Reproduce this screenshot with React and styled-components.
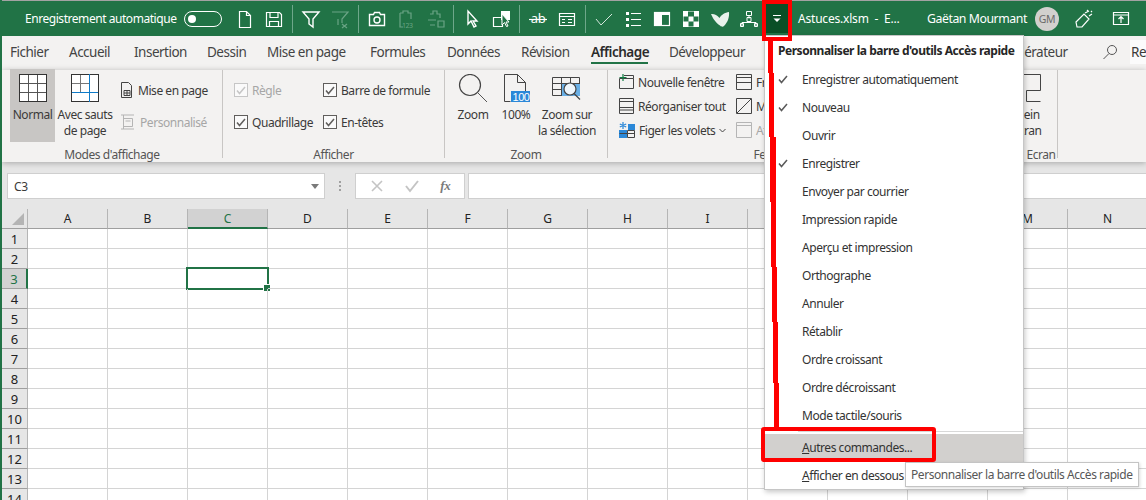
import React from "react"
import styled, { createGlobalStyle } from "styled-components"

const GlobalStyle = createGlobalStyle`
    html, body {
        margin: 0;
        padding: 0;
        background: #fff;
    }
    * {
        box-sizing: border-box;
    }
`

const GREEN = "#217346"
const FONT = `"Noto Sans", "Open Sans", sans-serif`

const Page = styled.div`
    position: relative;
    width: 1146px;
    height: 500px;
    overflow: hidden;
    display: flex;
    flex-direction: column;
    border-left: 2px solid ${GREEN};
    font-family: ${FONT};
    font-size: 12px;
    color: #3b3a39;
    letter-spacing: -0.45px;
`

const TitleBar = styled.header`
    flex: none;
    height: 36px;
    display: flex;
    align-items: center;
    background: ${GREEN};
    border-top: 1px solid #a3a3a3;
    color: #fff;
    padding-left: 23px;
`

const AutoSave = styled.span`
    width: 159px;
    white-space: nowrap;
`

const Toggle = styled.span`
    width: 38px;
    height: 16px;
    border: 1px solid #fff;
    border-radius: 8px;
    display: flex;
    align-items: center;
    padding-left: 3px;
    margin-right: 8px;
    &::before {
        content: "";
        width: 8px;
        height: 8px;
        border-radius: 50%;
        background: #fff;
    }
`

const QatSlot = styled.span`
    flex: none;
    width: 29px;
    height: 30px;
    margin-left: ${(p) => p.$left || 0}px;
    display: flex;
    align-items: center;
    justify-content: center;
`

const QatSep = styled.span`
    flex: none;
    width: 1px;
    height: 28px;
    margin: 0 3.5px;
    background: #6ea78a;
`

const QatMore = styled.span`
    flex: none;
    width: 24px;
    height: 29px;
    margin-left: 2px;
    background: #0a4f26;
    display: flex;
    align-items: center;
    justify-content: center;
`

const FileName = styled.span`
    width: 129px;
    margin-left: 9px;
    letter-spacing: -0.2px;
    white-space: pre;
`

const UserName = styled.span`
    width: 108px;
    font-size: 12.3px;
    white-space: nowrap;
`

const Avatar = styled.span`
    flex: none;
    width: 24px;
    height: 24px;
    border-radius: 50%;
    background: #d2d0ce;
    color: #6b6a69;
    font-size: 10.5px;
    display: flex;
    align-items: center;
    justify-content: center;
    margin-right: 10px;
`

const TabRow = styled.nav`
    flex: none;
    height: 34px;
    display: flex;
    align-items: center;
    background: #f3f2f1;
    padding: 0 0 3px 8px;
    font-size: 13.5px;
    letter-spacing: -0.5px;
`

const Tab = styled.span`
    flex: none;
    position: relative;
    width: ${(p) => p.$w}px;
    white-space: nowrap;
    font-weight: ${(p) => (p.$active ? 600 : 400)};
    color: ${(p) => (p.$active ? "#2b2b2b" : "#444")};
    ${(p) => p.$active && `
        &::after {
            content: "";
            position: absolute;
            left: 0;
            bottom: -3px;
            width: 57px;
            height: 2px;
            background: #217346;
        }
    `}
`

const SearchSlot = styled.span`
    flex: none;
    width: 28px;
    margin-right: 6px;
    display: flex;
    justify-content: center;
`

const SearchBox = styled.span`
    flex: none;
    background: #fbfbfb;
    height: 24px;
    line-height: 24px;
    padding-left: 1px;
    white-space: nowrap;
`

const Ribbon = styled.section`
    flex: none;
    position: relative;
    z-index: 2;
    height: 92px;
    display: flex;
    align-items: flex-start;
    background: #f3f2f1;
    box-shadow: 0 1px 6px rgba(0, 0, 0, 0.28);
`

const Group = styled.div`
    flex: none;
    width: ${(p) => p.$w}px;
    height: 88px;
    display: flex;
    flex-direction: column;
    border-right: 1px solid #c8c6c4;
`

const GroupBody = styled.div`
    flex: none;
    height: 76px;
    display: flex;
    padding-left: ${(p) => p.$pad || 0}px;
`

const GroupLabel = styled.div`
    height: 12px;
    line-height: 18px;
    text-align: center;
    color: #555;
    white-space: nowrap;
`

const LargeButton = styled.div`
    flex: none;
    width: ${(p) => p.$w}px;
    height: 73px;
    margin-top: -1px;
    padding-top: 5px;
    display: flex;
    flex-direction: column;
    align-items: center;
    text-align: center;
    line-height: 16px;
    white-space: nowrap;
    background: ${(p) => (p.$active ? "#c8c6c4" : "transparent")};
    svg {
        margin-bottom: 5px;
    }
`

const SmallColumn = styled.div`
    flex: none;
    width: ${(p) => p.$w || "auto"};
    margin-left: ${(p) => p.$left || 0}px;
    padding-top: ${(p) => p.$top || 0}px;
    display: flex;
    flex-direction: column;
    gap: ${(p) => p.$gap || 0}px;
`

const SmallRow = styled.div`
    height: 24px;
    display: flex;
    align-items: center;
    gap: ${(p) => p.$gap || 5}px;
    white-space: nowrap;
    color: ${(p) => (p.$off ? "#a6a6a6" : "inherit")};
`

const CheckBox = styled.span`
    flex: none;
    width: 14px;
    height: 14px;
    border: 1px solid ${(p) => (p.$off ? "#c6c6c6" : "#605e5c")};
    background: #fafafa;
    display: flex;
    align-items: center;
    justify-content: center;
`

const FormulaBar = styled.div`
    flex: none;
    height: 47px;
    padding: 11px 0 0 5px;
    display: flex;
    align-items: flex-start;
    background: #e6e6e6;
`

const NameBox = styled.div`
    flex: none;
    width: 318px;
    height: 26px;
    background: #fff;
    border: 1px solid #cfcfcf;
    display: flex;
    align-items: center;
    justify-content: space-between;
    padding: 0 5px 0 6px;
    &::after {
        content: "";
        border-left: 4px solid transparent;
        border-right: 4px solid transparent;
        border-top: 5px solid #7a7a7a;
    }
`

const Grip = styled.div`
    flex: none;
    width: 30px;
    height: 26px;
    display: flex;
    flex-direction: column;
    align-items: center;
    justify-content: center;
    gap: 2px;
    span {
        width: 2px;
        height: 2px;
        background: #a0a0a0;
    }
`

const FxBox = styled.div`
    flex: none;
    width: 110px;
    height: 26px;
    background: #fff;
    border: 1px solid #cfcfcf;
    display: flex;
    align-items: center;
    justify-content: space-around;
    padding: 0 3px;
`

const FxGlyph = styled.span`
    font-family: "Liberation Serif", serif;
    font-style: italic;
    font-size: 13px;
    font-weight: 700;
    color: #7a7a7a;
`

const FormulaInput = styled.div`
    flex: 1;
    height: 26px;
    margin-left: 3px;
    background: #fff;
    border: 1px solid #cfcfcf;
    border-right: 0;
`

const Sheet = styled.div`
    flex: 1;
    display: grid;
    grid-template-columns: 26px repeat(14, 80px);
    grid-auto-rows: 20px;
    background: #fff;
    color: #222;
    letter-spacing: 0;
`

const Corner = styled.div`
    background: #e6e6e6;
    border-bottom: 1px solid #9f9f9f;
    border-right: 1px solid #b5b5b5;
    display: flex;
    align-items: flex-start;
    justify-content: flex-end;
    padding: 4px 3px 0 0;
    &::after {
        content: "";
        border-left: 12px solid transparent;
        border-bottom: 12px solid #b4b4b4;
    }
`

const ColHead = styled.div`
    display: flex;
    align-items: center;
    justify-content: center;
    background: ${(p) => (p.$selected ? "#d2d2d2" : "#e6e6e6")};
    color: ${(p) => (p.$selected ? "#217346" : "#222")};
    border-right: 1px solid #b5b5b5;
    border-bottom: ${(p) => (p.$selected ? "2px solid #217346" : "1px solid #9f9f9f")};
`

const RowHead = styled.div`
    display: flex;
    align-items: center;
    justify-content: center;
    font-size: 13px;
    background: ${(p) => (p.$selected ? "#d2d2d2" : "#e6e6e6")};
    color: ${(p) => (p.$selected ? "#217346" : "#222")};
    border-bottom: 1px solid #9f9f9f;
    border-right: ${(p) => (p.$selected ? "2px solid #217346" : "1px solid #b5b5b5")};
`

const Cell = styled.div`
    position: relative;
    border-right: 1px solid #d4d4d4;
    border-bottom: 1px solid #d4d4d4;
`

const CellCursor = styled.div`
    position: absolute;
    top: -2px;
    left: -2px;
    right: -2px;
    bottom: -2px;
    border: 2px solid #217346;
    &::after {
        content: "";
        position: absolute;
        right: -3px;
        bottom: -3px;
        width: 6px;
        height: 6px;
        background: #217346;
        border: 1px solid #fff;
        border-right: 0;
        border-bottom: 0;
    }
`

const Menu = styled.div`
    position: absolute;
    z-index: 5;
    left: 762px;
    top: 35px;
    width: 260px;
    height: 455px;
    background: #fff;
    border: 1px solid #c6c6c6;
    box-shadow: 1px 2px 5px rgba(0, 0, 0, 0.22);
    color: #333;
`

const MenuTitle = styled.div`
    height: 30px;
    padding: 6px 0 0 13px;
    font-weight: 700;
    letter-spacing: -0.46px;
    color: #262626;
    white-space: nowrap;
`

const MenuItem = styled.div`
    height: 28px;
    padding-bottom: 2px;
    display: flex;
    align-items: center;
    background: ${(p) => (p.$hover ? "#d2d0ce" : "transparent")};
    white-space: nowrap;
`

const CheckSlot = styled.span`
    flex: none;
    width: 37px;
    display: flex;
    justify-content: center;
    padding-right: 1px;
`

const MenuSep = styled.div`
    height: 3px;
    margin-left: 33px;
    &::before {
        content: "";
        display: block;
        height: 1px;
        margin-top: 1px;
        background: #d8d8d8;
    }
`

const Tooltip = styled.div`
    position: absolute;
    z-index: 6;
    left: 903px;
    top: 462px;
    width: 234px;
    height: 25px;
    line-height: 23px;
    padding-left: 5px;
    background: #fff;
    border: 1px solid #c4c4c4;
    box-shadow: 1px 1px 3px rgba(0, 0, 0, 0.15);
    color: #575757;
    white-space: nowrap;
`

const Annotation = styled.svg`
    position: absolute;
    z-index: 7;
    left: -2px;
    top: 0;
    pointer-events: none;
`

const W = { fill: "none", stroke: "#fff", strokeWidth: 1.2 }
const D = { fill: "none", stroke: "#6aa485", strokeWidth: 1.2 }
const B = { fill: "none", stroke: "#444", strokeWidth: 1 }

const Ico = ({ size = 20, children }) => (
    <svg width={size} height={size} viewBox={`0 0 ${size} ${size}`}>{children}</svg>
)

const qat = [
    <g {...W}><path d="M4.5 2.5h7l4 4v12h-11zM11.5 2.5v4h4" /></g>,
    <g {...W}><path d="M2.5 3.5h13l2 2v12h-15zM6 3.5v5h8v-5M5.5 17.5v-5h9v5" /></g>,
    "sep",
    <g {...W} strokeWidth="1.4"><path d="M2 3h16l-6 7v8l-4-3v-5z" /></g>,
    <g {...D}><path d="M2 3h16l-6 7v4M8 10v6M12 15l5 4M17 15l-5 4" /></g>,
    "sep",
    <g {...W} strokeWidth="1.4"><path d="M2.5 5.5h4l1-2h5l1 2h4v11h-15z" /><circle cx="10" cy="11" r="3" /></g>,
    <g {...D}><path d="M4 4h3V2h5v2h3v6M4 4v14h3" /><text x="6" y="19" fontSize="7" fill="#6aa485" stroke="none">123</text></g>,
    <g {...D}><path d="M5 5h3V2h4v3h3v4M3 11h8M5 16h5M13 12h6v6h-6z" /></g>,
    "sep",
    <g {...W} strokeWidth="1.4"><path d="M6 2v13l3-3 3 6 2-1-3-5h4z" /></g>,
    <g><rect x="10" y="2" width="9" height="9" fill="#fff" /><path d="M2.5 8.5h9v9h-9z" {...W} /><path d="M11 5v11l2.5-2.5 2 4 1.500-.5-2-4h3z" fill="#217346" stroke="#fff" /></g>,
    "sep",
    <g><text x="10" y="14" textAnchor="middle" fontSize="13" fill="#fff" fontFamily="Noto Sans">ab</text><path d="M1 10.500h18" {...W} /></g>,
    <g {...W}><path d="M2.500 4.500h15v12h-15zM2.500 7.500h15M5 10.500h3M11 10.500h4M5 13.500h3M11 13.500h4" /></g>,
    "sep",
    <path d="M2 10l5 6 11-11" fill="none" stroke="#d5e6dc" strokeWidth="1" />,
    <g><path d="M3 3h3v3H3zM3 9h3v3H3zM3 15h3v3H3z" fill="#fff" /><path d="M8 4.500h10M8 10.500h10M8 16.500h10" {...W} /></g>,
    <g><rect x="2.500" y="3.500" width="15" height="13" {...W} /><path d="M3 6h7v10H3z" fill="#fff" /><path d="M3 3h14v3H3z" fill="#fff" /></g>,
    <g><path d="M2 2h16v16H2z" fill="#fff" /><path d="M7 2.500h6v5H7zM2.500 7.500h5v5h-5zM12.500 7.500h5v5h-5zM7.500 12.500h5v5h-5z" fill="#217346" /></g>,
    <path d="M1 5c3-.5 6 1 8.500 4C11 6 15 3.500 19 3c.5 5-1 10-5 14-1 1-3 1-4-.5C7 15 3 10 1 5z" fill="#e9f2ec" />,
    <g {...W} strokeWidth="1"><path d="M7.500 2.500h5v4h-5zM10 6.500v3M3 17.500v-4h14v4M1.500 14.500h3v3h-3zM15.500 14.500h3v3h-3zM8 8.500h4v4H8z" /></g>,
]

const tabs = [
    ["Fichier", 59], ["Accueil", 65], ["Insertion", 73], ["Dessin", 60], ["Mise en page", 103],
    ["Formules", 77], ["Données", 74], ["Révision", 70], ["Affichage", 78], ["Développeur", 325],
    ["Accélérateur", 102],
]

const menuItems = [
    ["Enregistrer automatiquement", true],
    ["Nouveau", true],
    ["Ouvrir", false],
    ["Enregistrer", true],
    ["Envoyer par courrier", false],
    ["Impression rapide", false],
    ["Aperçu et impression", false],
    ["Orthographe", false],
    ["Annuler", false],
    ["Rétablir", false],
    ["Ordre croissant", false],
    ["Ordre décroissant", false],
    ["Mode tactile/souris", false],
]

// hand-drawn red line: x, width, top, bottom
const redLine = [
    [768, 5, 40, 73],
    [769, 5, 73, 137],
    [770, 6, 137, 202],
    [771, 5, 202, 267],
    [772, 5, 267, 322],
    [773, 5, 322, 383],
    [774, 5, 383, 428],
]

const columns = "ABCDEFGHIJKLMN".split("")
const rows = Array.from({ length: 14 }, (_, i) => i + 1)

const Check = ({ color = "#5a5a5a" }) => (
    <svg width="10" height="9" viewBox="0 0 10 9">
        <path d="M1 4.500l2.500 3L9 1" fill="none" stroke={color} strokeWidth="1.500" />
    </svg>
)

const Box = ({ off }) => (
    <CheckBox $off={off}><Check color={off ? "#c6c6c6" : "#605e5c"} /></CheckBox>
)

const GridIcon = ({ breaks }) => (
    <svg width="28" height="28" viewBox="0 0 28 28">
        <rect x="0.500" y="0.500" width="27" height="27" fill="#fff" stroke="#333" />
        {breaks ? (
            <>
                <path d="M9.500 1v18M18.500 1v26M1 9.500h17" stroke="#777" fill="none" />
                <path d="M1 18.500h26M18.500 0v28" stroke="#0f7bc8" fill="none" strokeWidth="1" />
            </>
        ) : (
            <path d="M9.500 1v26M18.500 1v26M1 9.500h26M1 18.500h26" stroke="#555" fill="none" />
        )}
    </svg>
)

const SmallIcon = ({ children, w = 15 }) => (
    <svg width={w} height="16" viewBox={`0 0 ${w} 16`}>{children}</svg>
)

export default function App() {
    return (
        <Page>
            <GlobalStyle />
            <TitleBar>
                <AutoSave>Enregistrement automatique</AutoSave>
                <Toggle />
                {qat.map((icon, i) =>
                    icon === "sep" ? <QatSep key={i} /> : <QatSlot key={i}><Ico>{icon}</Ico></QatSlot>
                )}
                <QatMore>
                    <svg width="10" height="10" viewBox="0 0 10 10">
                        <path d="M1 1.500h8" stroke="#fff" fill="none" />
                        <path d="M1.500 4.500h7L5 8z" fill="#fff" />
                    </svg>
                </QatMore>
                <FileName>Astuces.xlsm  -  E...</FileName>
                <UserName>Gaëtan Mourmant</UserName>
                <Avatar>GM</Avatar>
                <QatSlot>
                    <Ico>
                        <g {...W}><path d="M3 18l-1-5 8-8 5 5-7 8zM11 4l4-2M15 7l3-2M13 2l1-1M17 3l1-1" /></g>
                    </Ico>
                </QatSlot>
                <QatSlot $left={8}>
                    <Ico>
                        <g {...W}><path d="M2.500 3.500h15v12h-15zM2.500 6h15M10 14V8M7.500 10L10 7.500l2.500 2.500" /></g>
                    </Ico>
                </QatSlot>
            </TitleBar>

            <TabRow>
                {tabs.map(([label, w]) => (
                    <Tab key={label} $w={w} $active={label === "Affichage"}>{label}</Tab>
                ))}
                <SearchSlot>
                    <svg width="16" height="16" viewBox="0 0 16 16">
                        <circle cx="10" cy="6" r="4.500" fill="none" stroke="#555" />
                        <path d="M7 9.500L1.500 15" stroke="#555" fill="none" />
                    </svg>
                </SearchSlot>
                <SearchBox>Rechercher</SearchBox>
            </TabRow>

            <Ribbon>
                <Group $w={221}>
                    <GroupBody $pad={8}>
                        <LargeButton $w={45} $active>
                            <GridIcon />
                            Normal
                        </LargeButton>
                        <LargeButton $w={60}>
                            <GridIcon breaks />
                            Avec sauts<br />de page
                        </LargeButton>
                        <SmallColumn $left={5} $top={8} $gap={8}>
                            <SmallRow>
                                <SmallIcon w={13}>
                                    <path d="M1.500.500h7l3 3v12h-10zM4 8.500h6v5H4zM4 11h6M7 8.500v5" {...B} />
                                </SmallIcon>
                                Mise en page
                            </SmallRow>
                            <SmallRow $off>
                                <SmallIcon>
                                    <path d="M1 1h13M1 15h13M3.500 1v14M3.500 4.500h9v8h-9M5.500 7h5" fill="none" stroke="#b5b5b5" />
                                </SmallIcon>
                                Personnalisé
                            </SmallRow>
                        </SmallColumn>
                    </GroupBody>
                    <GroupLabel>Modes d'affichage</GroupLabel>
                </Group>

                <Group $w={222}>
                    <GroupBody $pad={11}>
                        <SmallColumn $w="89px" $top={8} $gap={8}>
                            <SmallRow $off $gap={4}><Box off />Règle</SmallRow>
                            <SmallRow $gap={4}><Box />Quadrillage</SmallRow>
                        </SmallColumn>
                        <SmallColumn $top={8} $gap={8}>
                            <SmallRow $gap={4}><Box />Barre de formule</SmallRow>
                            <SmallRow $gap={4}><Box />En-têtes</SmallRow>
                        </SmallColumn>
                    </GroupBody>
                    <GroupLabel>Afficher</GroupLabel>
                </Group>

                <Group $w={163}>
                    <GroupBody>
                        <LargeButton $w={56}>
                            <svg width="30" height="28" viewBox="0 0 30 28">
                                <circle cx="12" cy="11" r="10.500" fill="none" stroke="#444" strokeWidth="1.200" />
                                <path d="M19.500 18.500L29 28" stroke="#555" fill="none" />
                            </svg>
                            Zoom
                        </LargeButton>
                        <LargeButton $w={30}>
                            <svg width="28" height="28" viewBox="0 0 28 28">
                                <path d="M2.500 .500h13l8 8v9M2.500 .500v27h6M15.500 .500v8h8" {...B} />
                                <rect x="9" y="17" width="19" height="11" fill="#2b88d8" />
                                <text x="10.500" y="26.500" fontSize="11" fill="#fff" fontFamily="Liberation Sans">100</text>
                            </svg>
                            100%
                        </LargeButton>
                        <LargeButton $w={72}>
                            <svg width="30" height="28" viewBox="0 0 30 28">
                                <path d="M.500 3.500h27v18H.500zM.500 9.500h27M.500 15.500h9M9.500 3.500v18M18.500 3.500v6" {...B} />
                                <rect x="10" y="10" width="18" height="12" fill="#69afe5" />
                                <circle cx="18" cy="15" r="6" fill="#eef6fc" stroke="#444" strokeWidth="1.200" />
                                <path d="M22 19.500l6 6" stroke="#444" fill="none" strokeWidth="1.200" />
                            </svg>
                            Zoom sur<br />la sélection
                        </LargeButton>
                    </GroupBody>
                    <GroupLabel>Zoom</GroupLabel>
                </Group>

                <Group $w={332}>
                    <GroupBody $pad={11}>
                        <SmallColumn $w="117px">
                            <SmallRow $gap={4}>
                                <SmallIcon>
                                    <path d="M.500 4.500h14v10H.500zM5 1.500h9.500v3" {...B} />
                                    <path d="M4 0v7M.500 3.500h7" stroke="#107c41" fill="none" strokeWidth="1.200" />
                                </SmallIcon>
                                Nouvelle fenêtre
                            </SmallRow>
                            <SmallRow $gap={4}>
                                <SmallIcon>
                                    <path d="M.500 .500h14v15H.500zM.500 3.500h14M.500 9.500h14M.500 12h14" {...B} />
                                </SmallIcon>
                                Réorganiser tout
                            </SmallRow>
                            <SmallRow $gap={4}>
                                <SmallIcon w={16}>
                                    <path d="M0 8h8v8H0zM9 2h7v6H9z" fill="#2b88d8" />
                                    <path d="M8.500 8.500h7v7h-7zM.500 11.500h15" {...B} />
                                    <path d="M4 0v7M.800 2l6.400 3M7.200 2L.800 5" stroke="#2b88d8" fill="none" strokeWidth="1.200" />
                                </SmallIcon>
                                Figer les volets
                                <svg width="7" height="5" viewBox="0 0 7 5">
                                    <path d="M.500 1l3 3 3-3" {...B} />
                                </svg>
                            </SmallRow>
                        </SmallColumn>
                        <SmallColumn>
                            <SmallRow $gap={4}>
                                <SmallIcon w={16}>
                                    <path d="M.500 .500h15v15H.500zM.500 3.500h15M.500 8.500h15" {...B} />
                                </SmallIcon>
                                Fractionner
                            </SmallRow>
                            <SmallRow $gap={4}>
                                <SmallIcon w={16}>
                                    <path d="M.500 .500h15v15H.500zM1 15L15 1" {...B} />
                                </SmallIcon>
                                Masquer
                            </SmallRow>
                            <SmallRow $gap={4} $off>
                                <SmallIcon w={16}>
                                    <path d="M.500 .500h15v15H.500zM.500 3.500h15" fill="none" stroke="#b5b5b5" />
                                </SmallIcon>
                                Afficher
                            </SmallRow>
                        </SmallColumn>
                    </GroupBody>
                    <GroupLabel>Fenêtre</GroupLabel>
                </Group>

                <Group $w={57} />

                <Group $w={61}>
                    <GroupBody>
                        <LargeButton $w={60}>
                            <svg width="28" height="28" viewBox="0 0 28 28">
                                <path d="M.500 .500h27v16h-14v11h14" {...B} />
                            </svg>
                            Plein<br />écran
                        </LargeButton>
                    </GroupBody>
                    <GroupLabel>Plein Ecran</GroupLabel>
                </Group>
            </Ribbon>

            <FormulaBar>
                <NameBox>C3</NameBox>
                <Grip><span /><span /><span /></Grip>
                <FxBox>
                    <svg width="14" height="14" viewBox="0 0 14 14">
                        <path d="M2 2l10 10M12 2L2 12" stroke="#c4c4c4" fill="none" strokeWidth="1.600" />
                    </svg>
                    <svg width="14" height="14" viewBox="0 0 14 14">
                        <path d="M1 7l4 5 8-10" stroke="#c4c4c4" fill="none" strokeWidth="2" />
                    </svg>
                    <FxGlyph>fx</FxGlyph>
                </FxBox>
                <FormulaInput />
            </FormulaBar>

            <Sheet>
                <Corner />
                {columns.map((c) => (
                    <ColHead key={c} $selected={c === "C"}>{c}</ColHead>
                ))}
                {rows.map((r) => (
                    <React.Fragment key={r}>
                        <RowHead $selected={r === 3}>{r}</RowHead>
                        {columns.map((c) => (
                            <Cell key={c}>{r === 3 && c === "C" && <CellCursor />}</Cell>
                        ))}
                    </React.Fragment>
                ))}
            </Sheet>

            <Menu>
                <MenuTitle>Personnaliser la barre d'outils Accès rapide</MenuTitle>
                {menuItems.map(([label, checked]) => (
                    <MenuItem key={label}>
                        <CheckSlot>{checked && <Check />}</CheckSlot>
                        {label}
                    </MenuItem>
                ))}
                <MenuSep />
                <MenuItem $hover>
                    <CheckSlot />
                    <span><u>A</u>utres commandes...</span>
                </MenuItem>
                <MenuItem>
                    <CheckSlot />
                    <span><u>A</u>fficher en dessous du ruban</span>
                </MenuItem>
            </Menu>
            <Tooltip>Personnaliser la barre d'outils Accès rapide</Tooltip>

            <Annotation width="1146" height="500" viewBox="0 0 1146 500">
                <rect x="764" y="2" width="26" height="37" fill="none" stroke="#ff0000" strokeWidth="4" />
                {redLine.map(([x, w, top, bottom]) => (
                    <rect key={top} x={x} y={top} width={w} height={bottom - top} fill="#ff0000" />
                ))}
                <rect x="763" y="429" width="171" height="31" rx="1" fill="none" stroke="#ff0000" strokeWidth="4" />
            </Annotation>
        </Page>
    )
}
